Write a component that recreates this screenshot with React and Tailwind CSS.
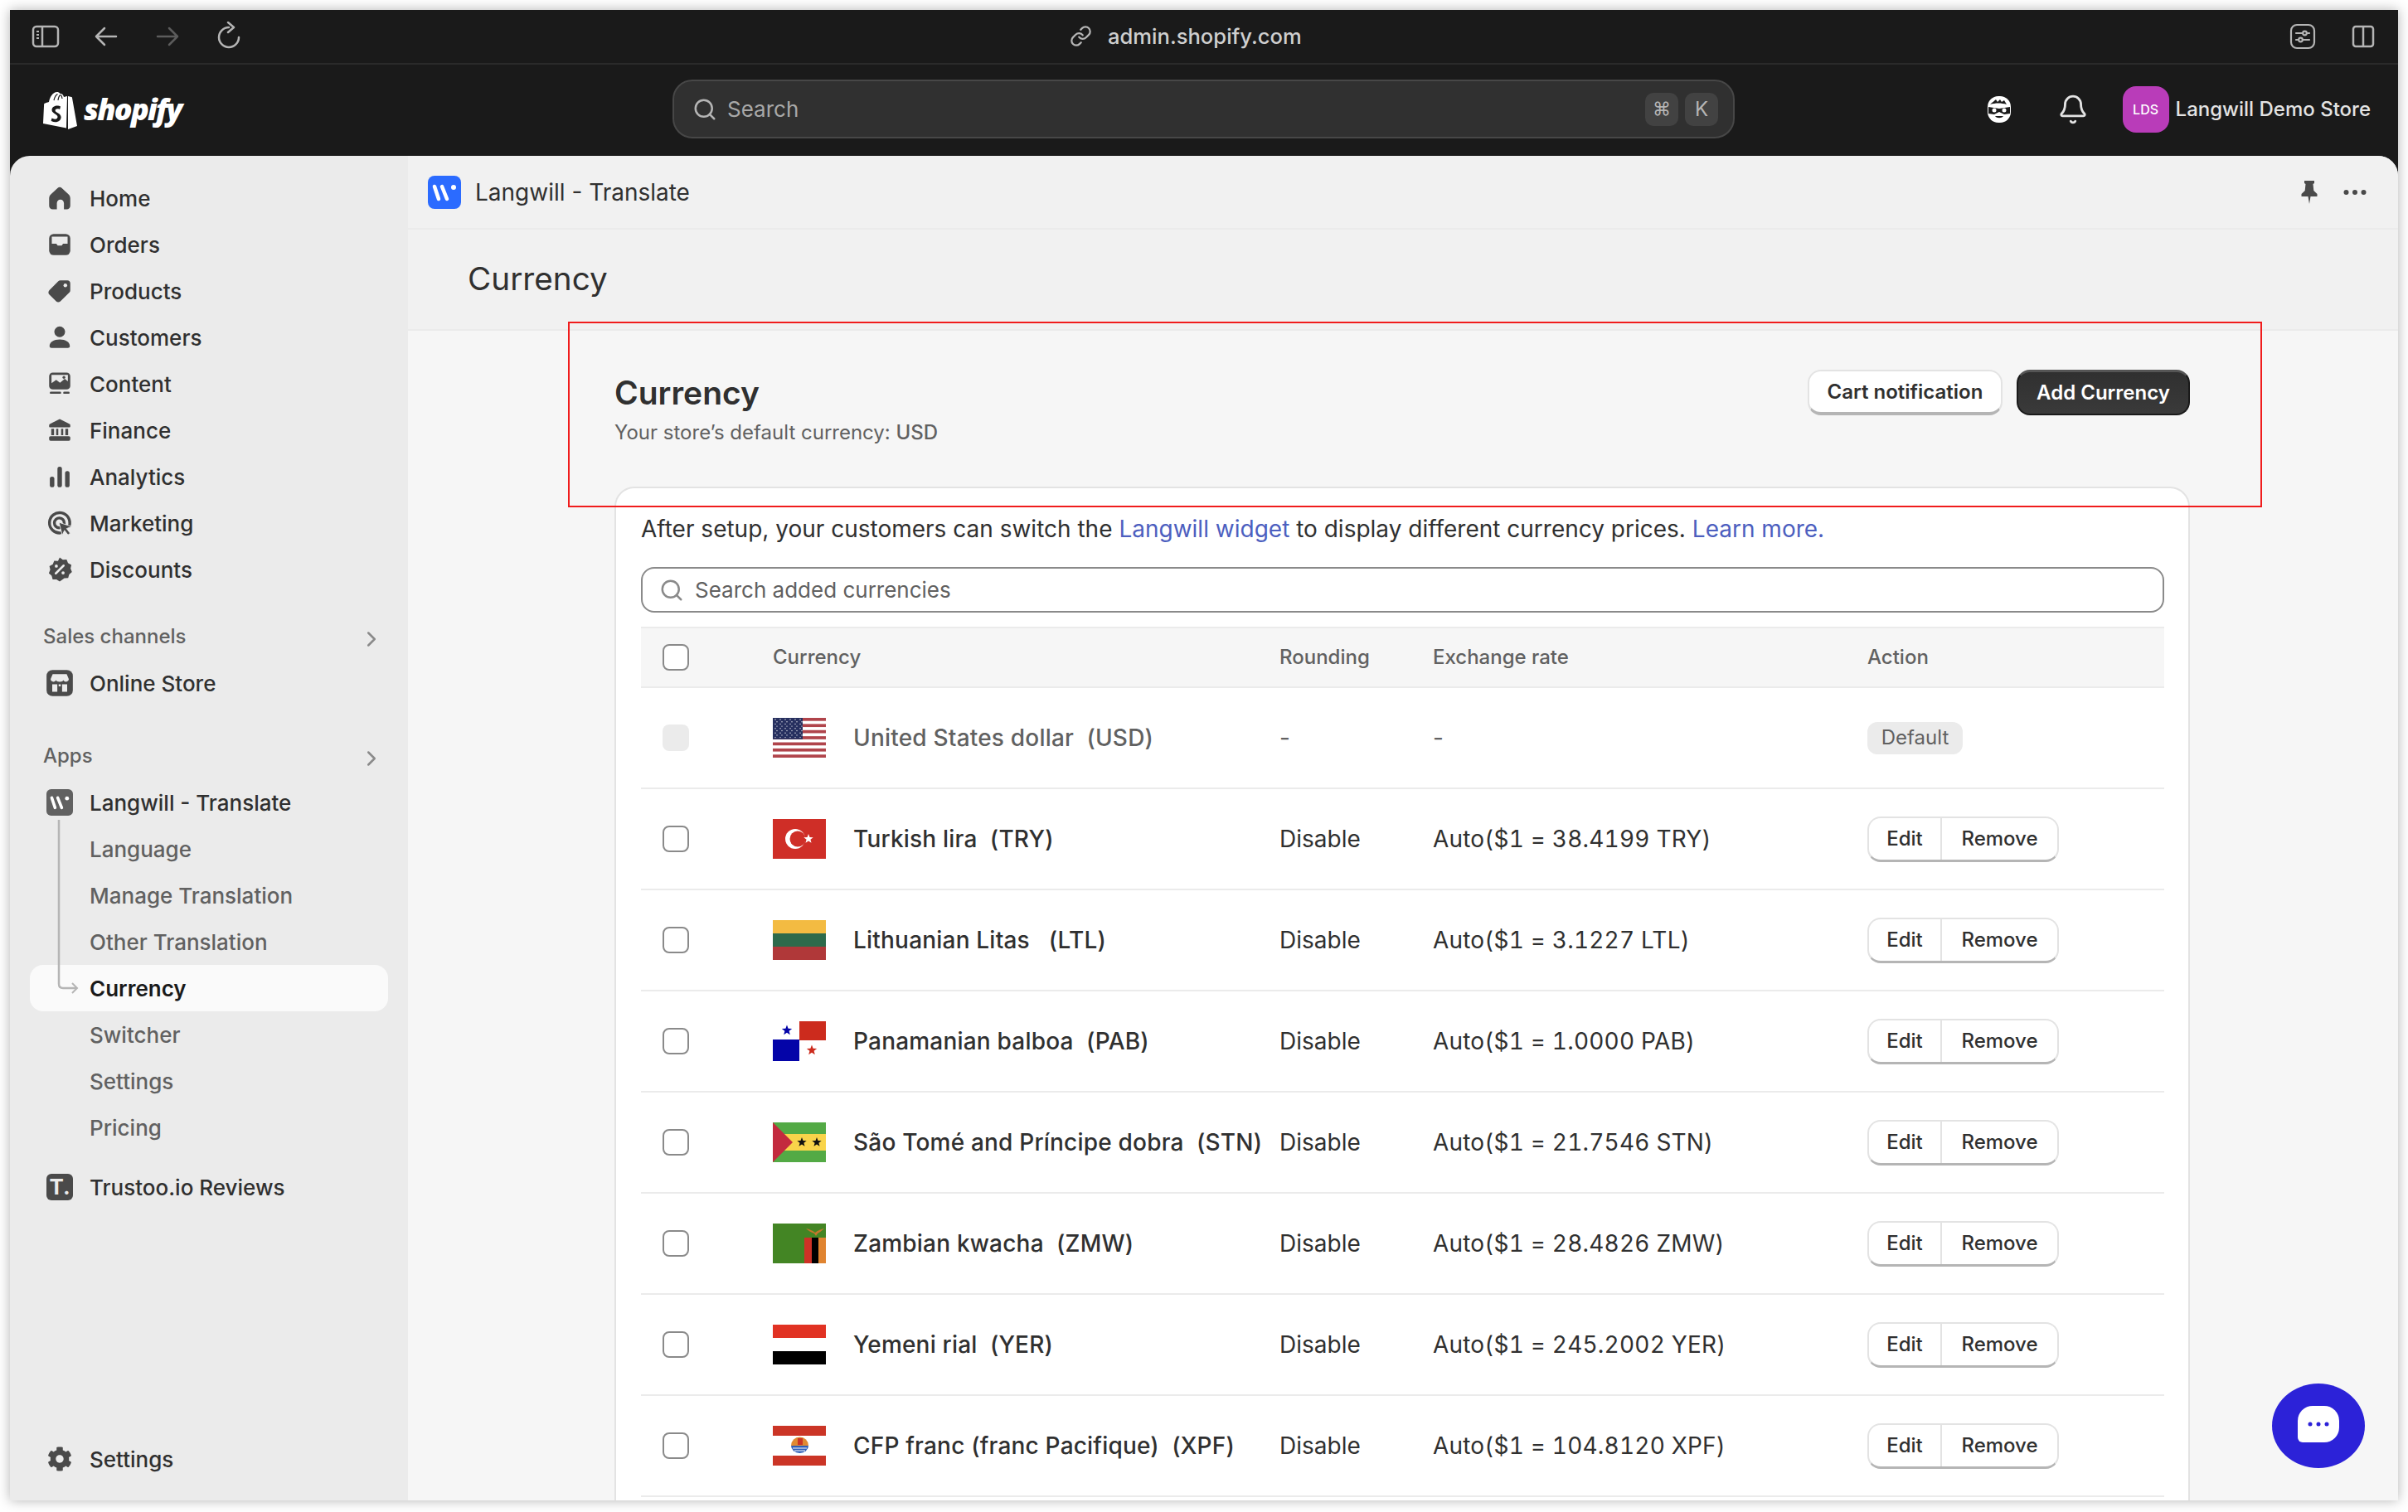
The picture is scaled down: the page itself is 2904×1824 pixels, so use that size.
import React from "react";
import { Bell, ChevronRight, Link as LinkIcon, Search } from "lucide-react";
import { FaCog } from "react-icons/fa";

const ICON = "#4a4a4a";
const SIDE = "#ebebeb";

function Glyph({ children, size = 34 }) {
  return (
    <svg width={size} height={size} viewBox="0 0 20 20" fill={ICON}>
      {children}
    </svg>
  );
}

const HomeIcon = () => (
  <Glyph>
    <path d="M10 2.2c.5 0 1 .2 1.4.6l4.9 4.6c.8.7 1.2 1.7 1.2 2.8v5.3c0 1.4-1.1 2.5-2.5 2.5h-2v-4.3c0-1.4-1.1-2.6-2.500-2.6s-2.500 1.2-2.500 2.600V18H5c-1.400 0-2.500-1.100-2.500-2.500v-5.300c0-1.100.4-2.100 1.200-2.800l4.900-4.600c.4-.4.9-.6 1.400-.6z" />
  </Glyph>
);
const OrdersIcon = () => (
  <Glyph>
    <rect x="2.500" y="2.500" width="15" height="15" rx="3.200" />
    <path d="M4.400 4.400h11.200v5h-3.200l-1 1.400H8.600l-1-1.400H4.400z" fill={SIDE} />
  </Glyph>
);
const ProductsIcon = () => (
  <Glyph>
    <path d="M17.500 4.500v5c0 .6-.2 1.100-.6 1.500l-6.400 6.400c-.9.8-2.200.8-3 0l-4.900-4.900c-.8-.8-.8-2.100 0-3L9 3.100c.4-.4.9-.6 1.500-.6h5c1.100 0 2 .9 2 2z" />
    <circle cx="14" cy="6" r="1.300" fill={SIDE} />
  </Glyph>
);
const CustomersIcon = () => (
  <Glyph>
    <circle cx="10" cy="6" r="3.800" />
    <path d="M2.800 16.200c0-2.800 3-4.700 7.200-4.700s7.200 1.900 7.200 4.700c0 .9-.6 1.300-1.400 1.300H4.200c-.8 0-1.400-.4-1.400-1.300z" />
  </Glyph>
);
const ContentIcon = () => (
  <Glyph>
    <rect x="2.500" y="2" width="15" height="12" rx="2.600" />
    <path d="M4.200 3.700h11.600v4.500l-2.200-1.700-3.400 2.700-2.700-2-3.300 2.300z" fill={SIDE} />
    <circle cx="13" cy="5.400" r="1" />
    <rect x="3" y="15.600" width="8" height="1.500" rx=".7" />
    <rect x="12.500" y="15.600" width="4.500" height="1.500" rx=".7" />
  </Glyph>
);
const FinanceIcon = () => (
  <Glyph>
    <path d="M10 2l7 3.600c.4.2.5.5.5.9v1c0 .3-.2.500-.5.500H3c-.3 0-.5-.2-.5-.5v-1c0-.4.100-.7.500-.9z" />
    <path d="M4 9h2v4.500H4zM7.500 9h1.500v4.500H7.500zM11 9h1.500v4.500H11zM14 9h2v4.500h-2z" />
    <rect x="2.500" y="14.200" width="15" height="3.300" rx="1" />
  </Glyph>
);
const AnalyticsIcon = () => (
  <Glyph>
    <rect x="3" y="10" width="3.200" height="7.500" rx="1.500" />
    <rect x="8.400" y="3" width="3.200" height="14.500" rx="1.500" />
    <rect x="13.800" y="6" width="3.200" height="11.500" rx="1.500" />
  </Glyph>
);
const MarketingIcon = () => (
  <Glyph>
    <path d="M16.800 12a7.200 7.200 0 1 0-6.300 5" fill="none" stroke={ICON} strokeWidth="2" strokeLinecap="round" />
    <path d="M13.200 10.200a3.500 3.500 0 1 0-3.500 3.200" fill="none" stroke={ICON} strokeWidth="2" strokeLinecap="round" />
    <path d="M9.500 9.500l9 3-3.600 1.400 2.500 3.300-1.500 1.200-2.500-3.200-1.600 3.400z" stroke={SIDE} strokeWidth=".5" />
  </Glyph>
);
const DiscountsIcon = () => (
  <Glyph>
    <path d="M10 1.500l2.200 1.600 2.700-.2 1 2.500 2.400 1.300-.6 2.600 1 2.400-2 1.800-.7 2.600-2.700.1L10 18.500l-2.300-1.400-2.700-.1-.7-2.600-2-1.800 1-2.400-.6-2.600 2.400-1.300 1-2.500 2.700.2z" />
    <path d="M7.200 12.800l5.600-5.600" stroke={SIDE} strokeWidth="1.500" strokeLinecap="round" />
    <circle cx="7.600" cy="7.600" r="1.100" fill={SIDE} />
    <circle cx="12.400" cy="12.400" r="1.100" fill={SIDE} />
  </Glyph>
);
const StoreIcon = () => (
  <Glyph size={36}>
    <rect x="1.200" y="1.200" width="17.600" height="17.600" rx="4" />
    <path d="M5.300 4h9.400l1.400 3.400c0 1-.9 1.700-1.800 1.700-.8 0-1.500-.4-1.800-1.100-.3.700-1.100 1.100-2.500 1.100S7.800 8.700 7.500 8c-.3.700-1 1.100-1.800 1.100-.9 0-1.800-.7-1.800-1.700z" fill={SIDE} />
    <path d="M5 10.800h3.400v5H5zM11.600 10.800H15v5h-3.400zM9.300 10.800h1.400v1.400H9.300z" fill={SIDE} />
  </Glyph>
);
const LangwillMark = ({ bg, size, radius }) => (
  <svg width={size} height={size} viewBox="0 0 40 40">
    <rect width="40" height="40" rx={radius} fill={bg} />
    <path d="M8 13l5 15M17 13l6 15" stroke="#fff" strokeWidth="4.500" strokeLinecap="round" />
    <circle cx="31" cy="14" r="3" fill="#fff" />
  </svg>
);

// flags, all drawn on a 64x48 box
function star(cx, cy, r) {
  const pts = [];
  for (let i = 0; i < 10; i++) {
    const a = -Math.PI / 2 + (i * Math.PI) / 5;
    const d = i % 2 === 0 ? r : r * 0.42;
    pts.push(`${cx + d * Math.cos(a)},${cy + d * Math.sin(a)}`);
  }
  return pts.join(" ");
}

const Flag = ({ children }) => (
  <svg width="64" height="48" viewBox="0 0 64 48" className="shrink-0">
    {children}
  </svg>
);

const flags = {
  USD: (
    <Flag>
      <rect width="64" height="48" fill="#fff" />
      {[0, 1, 2, 3, 4, 5, 6].map((i) => (
        <rect key={i} y={i * 7.38} width="64" height="3.690" fill="#b0444b" />
      ))}
      <rect width="36" height="25.800" fill="#27305f" />
      {[0, 1, 2, 3, 4, 5, 6, 7, 8].map((r) =>
        [0, 1, 2, 3, 4, 5].map((c) => (
          <circle key={`${r}-${c}`} cx={3 + c * 6 + (r % 2) * 2} cy={2 + r * 2.700} r=".7" fill="#e8e8ee" />
        ))
      )}
    </Flag>
  ),
  TRY: (
    <Flag>
      <rect width="64" height="48" fill="#cf2e27" />
      <circle cx="27" cy="24" r="12" fill="#fff" />
      <circle cx="30" cy="24" r="9.500" fill="#cf2e27" />
      <polygon points={star(43, 24, 6)} fill="#fff" />
    </Flag>
  ),
  LTL: (
    <Flag>
      <rect width="64" height="16" fill="#f3bb42" />
      <rect y="16" width="64" height="16" fill="#2d6a4b" />
      <rect y="32" width="64" height="16" fill="#b03839" />
    </Flag>
  ),
  PAB: (
    <Flag>
      <rect width="64" height="48" fill="#fff" />
      <rect x="32" width="32" height="23" fill="#cc2b1d" />
      <rect y="22" width="32" height="26" fill="#0404a8" />
      <polygon points={star(17, 11, 6.500)} fill="#0404a8" />
      <polygon points={star(47, 35, 6.500)} fill="#cc2b1d" />
    </Flag>
  ),
  STN: (
    <Flag>
      <rect width="64" height="48" fill="#53aa45" />
      <rect y="14" width="64" height="20" fill="#f9d44a" />
      <polygon points="0,0 24,24 0,48" fill="#c32a3e" />
      <polygon points={star(35, 24, 6)} fill="#111" />
      <polygon points={star(53, 24, 6)} fill="#111" />
    </Flag>
  ),
  ZMW: (
    <Flag>
      <rect width="64" height="48" fill="#438524" />
      <rect x="38" y="17" width="9" height="31" fill="#ce3226" />
      <rect x="47" y="17" width="8" height="31" fill="#000" />
      <rect x="55" y="17" width="9" height="31" fill="#e08430" />
      <path d="M40 6c4 1 7 2 11 5 4-3 7-4 11-5-3 3-6 5-8 6l-2 3-2-3c-3-1-7-3-10-6z" fill="#c5772c" />
    </Flag>
  ),
  YER: (
    <Flag>
      <rect width="64" height="16" fill="#e13223" />
      <rect y="16" width="64" height="16" fill="#fff" />
      <rect y="32" width="64" height="16" fill="#000" />
    </Flag>
  ),
  XPF: (
    <Flag>
      <rect width="64" height="48" fill="#fff" />
      <rect width="64" height="12" fill="#cb3526" />
      <rect y="36" width="64" height="12" fill="#cb3526" />
      <path d="M22 24a10.500 10.500 0 0 1 21 0z" fill="#e08a32" />
      <rect x="30" y="15" width="6" height="8" fill="#cb3526" />
      <path d="M22 24h21a10.500 9 0 0 1-21 0z" fill="#2f5fb8" />
      <path d="M24 27h17M26 30h13" stroke="#fff" strokeWidth="1.200" />
    </Flag>
  ),
};

const mainNav = [
  { name: "Home", icon: <HomeIcon /> },
  { name: "Orders", icon: <OrdersIcon /> },
  { name: "Products", icon: <ProductsIcon /> },
  { name: "Customers", icon: <CustomersIcon /> },
  { name: "Content", icon: <ContentIcon /> },
  { name: "Finance", icon: <FinanceIcon /> },
  { name: "Analytics", icon: <AnalyticsIcon /> },
  { name: "Marketing", icon: <MarketingIcon /> },
  { name: "Discounts", icon: <DiscountsIcon /> },
];

const subNav = ["Language", "Manage Translation", "Other Translation", "Currency", "Switcher", "Settings", "Pricing"];

const currencies = [
  { code: "TRY", name: "Turkish lira  (TRY)", rate: "Auto($1 = 38.4199 TRY)" },
  { code: "LTL", name: "Lithuanian Litas   (LTL)", rate: "Auto($1 = 3.1227 LTL)" },
  { code: "PAB", name: "Panamanian balboa  (PAB)", rate: "Auto($1 = 1.0000 PAB)" },
  { code: "STN", name: "São Tomé and Príncipe dobra  (STN)", rate: "Auto($1 = 21.7546 STN)" },
  { code: "ZMW", name: "Zambian kwacha  (ZMW)", rate: "Auto($1 = 28.4826 ZMW)" },
  { code: "YER", name: "Yemeni rial  (YER)", rate: "Auto($1 = 245.2002 YER)" },
  { code: "XPF", name: "CFP franc (franc Pacifique)  (XPF)", rate: "Auto($1 = 104.8120 XPF)" },
];

const rowGrid = "grid grid-cols-[159px_611px_185px_524px_1fr] items-center";

function NavRow({ icon, children }) {
  return (
    <div className="flex h-[56px] items-center gap-[16px] pl-[16px] text-[26px] font-medium text-[#303030]">
      <span className="flex w-[40px] justify-center">{icon}</span>
      <span>{children}</span>
    </div>
  );
}

function SectionRow({ children }) {
  return (
    <div className="flex h-[56px] items-center justify-between pl-[16px] pr-[5px] text-[24px] font-medium text-[#616161]">
      <span>{children}</span>
      <ChevronRight size={30} color="#8a8a8a" strokeWidth={2} className="mt-[6px]" />
    </div>
  );
}

function Checkbox({ disabled }) {
  return disabled ? (
    <span className="ml-[26px] block h-[32px] w-[32px] rounded-[8px] bg-[#ebebeb]" />
  ) : (
    <span className="ml-[26px] block h-[32px] w-[32px] rounded-[8px] border-2 border-[#8a8a8a] bg-white" />
  );
}

export default function App() {
  return (
    <div className="h-[1824px] w-[2904px] overflow-hidden bg-white px-[12px] pb-[14px] pt-[12px] font-[family-name:Inter,sans-serif]">
      <div className="flex h-full flex-col overflow-hidden bg-[#1a1a1a] shadow-[0_0_14px_rgba(0,0,0,0.3)]">
        {/* browser bar */}
        <div className="relative flex h-[66px] shrink-0 items-center justify-between border-b-2 border-[#2a2a2a] pl-[26px] pr-[28px]">
          <div className="flex items-center">
            <svg width="34" height="28" viewBox="0 0 34 28" fill="none" stroke="#b5b5b5" strokeWidth="2.500">
              <rect x="2" y="2" width="30" height="24" rx="4" />
              <path d="M13 2v24" />
              <path d="M6 8h3M6 12h3M6 16h3" strokeWidth="2" />
            </svg>
            <svg width="28" height="24" viewBox="0 0 28 24" fill="none" stroke="#b5b5b5" strokeWidth="2.500" strokeLinecap="round" strokeLinejoin="round" className="ml-[42px]">
              <path d="M2 12h24M12 2L2 12l10 10" />
            </svg>
            <svg width="28" height="24" viewBox="0 0 28 24" fill="none" stroke="#5c5c5c" strokeWidth="2.500" strokeLinecap="round" strokeLinejoin="round" className="ml-[46px]">
              <path d="M26 12H2M16 2l10 10-10 10" />
            </svg>
            <svg width="28" height="34" viewBox="0 0 28 34" fill="none" stroke="#b5b5b5" strokeWidth="2.500" strokeLinecap="round" strokeLinejoin="round" className="ml-[46px] mt-[-2px]">
              <path d="M14 7a12 12 0 1 0 12 12" />
              <path d="M13 1l7 6-7 6" />
            </svg>
          </div>
          <div className="absolute left-[1278px] flex items-center gap-[19px] text-[25.6px] font-medium text-[#cfcfcf]">
            <LinkIcon size={27} color="#b5b5b5" strokeWidth={2} />
            <span>admin.shopify.com</span>
          </div>
          <div className="flex items-center gap-[43px]">
            <svg width="32" height="32" viewBox="0 0 32 32" fill="none" stroke="#b5b5b5" strokeWidth="2.200" strokeLinecap="round">
              <rect x="2" y="2" width="28" height="28" rx="7" />
              <path d="M8 12h8M21 12h3M8 20h3M16 20h8" />
              <circle cx="18.500" cy="12" r="2.300" />
              <circle cx="13.500" cy="20" r="2.300" />
            </svg>
            <svg width="28" height="28" viewBox="0 0 28 28" fill="none" stroke="#b5b5b5" strokeWidth="2.500">
              <rect x="2" y="2" width="24" height="24" rx="3" />
              <path d="M14 2v24" />
            </svg>
          </div>
        </div>

        {/* admin top bar */}
        <div className="flex h-[110px] shrink-0 items-center pb-[3px]">
          <div className="flex w-[799px] items-center gap-[7px] pl-[40px]">
            <svg width="42" height="48" viewBox="0 0 42 48">
              <path d="M30 8L34 9c.5 0 1 .4 1 .9L41 44l-11 4z" fill="#fff" />
              <path d="M29 8l-4 1c-.8-2.500-2-4-4-4h-.5C19.500 3.500 18 3 17 3 11 3 8 10 7 15c-2 .6-4 1.200-4.500 1.400-1.200.4-1.300.4-1.400 1.600L0 41l28 5.500z" fill="#fff" />
              <path d="M21 20.500c-1-.5-2.500-.9-4-.9-4 0-6.500 2.500-6.500 5.200 0 4.300 7 4.800 7 8.300 0 1.700-1.300 2.600-3 2.600-1.900 0-4-1.200-4-1.200l-.9 3.200s2 1.600 5 1.600c4.300 0 7-2.800 7-6.100 0-4.700-7-5.300-7-8 0-1.200 1-2 2.600-2 1.500 0 2.900.7 2.900.7z" fill="#1a1a1a" />
              <path d="M13 13c.8-3.500 2.400-6.500 4.500-7.500M18 13c.4-3 1.400-5.500 2.800-6.500M23 11c-.2-2-.7-3.500-1.500-4.500" stroke="#1a1a1a" strokeWidth="1.200" fill="none" />
            </svg>
            <span className="text-[36px] font-extrabold italic leading-none tracking-[-1.800px] text-white font-[family-name:'Open_Sans',sans-serif]">shopify</span>
          </div>
          <div className="flex h-[71px] w-[1281px] items-center rounded-[24px] border-2 border-[#474747] bg-[#303030] pl-[22px] pr-[18px]">
            <Search size={30} color="#b5b5b5" strokeWidth={2} />
            <span className="ml-[12px] flex-1 text-[26px] text-[#a8a8a8]">Search</span>
            <span className="flex h-[40px] w-[40px] items-center justify-center rounded-[10px] bg-[#424242] text-[22px] text-[#b5b5b5]">⌘</span>
            <span className="ml-[8px] flex h-[40px] w-[40px] items-center justify-center rounded-[10px] bg-[#424242] text-[24px] text-[#b5b5b5]">K</span>
          </div>
          <div className="flex flex-1 items-center justify-end pr-[33px]">
            <svg width="32" height="34" viewBox="0 0 32 34" className="mr-[54px]">
              <rect x="2" y="1" width="28" height="32" rx="13" fill="#fff" />
              <path d="M5 11c3-3 5-4 7-6l2 3 3-3 2 3 3-2 3 5c-6-2-14-2-20 0z" fill="#1a1a1a" />
              <path d="M3 14l13 2 13-2v8l-7 1-6-3-6 3-7-1z" fill="#1a1a1a" />
              <circle cx="10" cy="18" r="2.500" fill="#fff" />
              <circle cx="22" cy="18" r="2.500" fill="#fff" />
              <path d="M11 25c2 3 8 3 10 0z" fill="#1a1a1a" />
            </svg>
            <Bell size={38} color="#e3e3e3" strokeWidth={1.800} className="mr-[41px]" />
            <span className="flex h-[56px] w-[56px] items-center justify-center rounded-[16px] bg-[#b93cb9] text-[16px] font-medium text-white">LDS</span>
            <span className="ml-[8px] text-[24px] font-medium text-[#e3e3e3]">Langwill Demo Store</span>
          </div>
        </div>

        {/* admin body */}
        <div className="flex min-h-0 flex-1 overflow-hidden rounded-t-[24px]">
          <aside className="flex w-[480px] shrink-0 flex-col bg-[#ebebeb] px-[24px] pb-[22px] pt-[23px]">
            {mainNav.map((item) => (
              <NavRow key={item.name} icon={item.icon}>
                {item.name}
              </NavRow>
            ))}
            <div className="mt-[25px]">
              <SectionRow>Sales channels</SectionRow>
              <NavRow icon={<StoreIcon />}>Online Store</NavRow>
            </div>
            <div className="mt-[32px]">
              <SectionRow>Apps</SectionRow>
              <NavRow icon={<LangwillMark bg="#616161" size={32} radius={7} />}>Langwill - Translate</NavRow>
              <div className="relative">
                {subNav.map((item) =>
                  item === "Currency" ? (
                    <div key={item} className="flex h-[56px] items-center rounded-[16px] bg-[#fafafa] pl-[72px] text-[26px] font-semibold text-[#1a1a1a]">
                      {item}
                    </div>
                  ) : (
                    <div key={item} className="flex h-[56px] items-center pl-[72px] text-[26px] font-medium text-[#616161]">
                      {item}
                    </div>
                  )
                )}
                <svg width="40" height="214" viewBox="0 0 40 214" fill="none" stroke="#b5b5b5" strokeWidth="2.500" className="absolute left-[30px] top-[-7px]">
                  <path d="M5 0v198q0 5 5 5h16" />
                  <path d="M21 197l6 6-6 6" strokeWidth="2" />
                </svg>
              </div>
              <div className="mt-[16px]">
                <NavRow
                  icon={
                    <span className="flex h-[32px] w-[32px] items-center justify-center rounded-[6px] bg-[#4a4a4a] text-[26px] font-bold leading-none text-[#ebebeb]">
                      T.
                    </span>
                  }
                >
                  Trustoo.io Reviews
                </NavRow>
              </div>
            </div>
            <div className="mt-auto">
              <NavRow icon={<FaCog size={30} color={ICON} />}>Settings</NavRow>
            </div>
          </aside>

          <main className="relative flex min-w-0 flex-1 flex-col bg-[#f6f6f6]">
            <div className="flex h-[89px] shrink-0 items-center justify-between border-b-2 border-[#ebebeb] bg-[#f1f1f1] pl-[24px] pr-[38px]">
              <div className="flex items-center gap-[17px]">
                <LangwillMark bg="#2b6bff" size={40} radius={8} />
                <span className="text-[28px] text-[#303030]">Langwill - Translate</span>
              </div>
              <div className="flex items-center gap-[29px]">
                <svg width="24" height="30" viewBox="0 0 24 30" fill="#4a4a4a">
                  <path d="M6 1h12v3l-1.500 1 .8 8 4.200 4v3H13.500l-1.500 9-1.500-9H2.500v-3l4.200-4 .8-8L6 4z" />
                </svg>
                <svg width="28" height="8" viewBox="0 0 28 8" fill="#4a4a4a">
                  <circle cx="3.500" cy="4" r="3" />
                  <circle cx="14" cy="4" r="3" />
                  <circle cx="24.500" cy="4" r="3" />
                </svg>
              </div>
            </div>
            <div className="flex h-[122px] shrink-0 items-center border-b-2 border-[#ebebeb] bg-[#f1f1f1] pb-[1px] pl-[72px] text-[38.7px] text-[#303030]">
              Currency
            </div>

            <div className="ml-[249px] flex min-h-0 w-[1900px] flex-1 flex-col overflow-hidden">
              <div className="flex h-[188px] shrink-0 justify-between pt-[47px]">
                <div>
                  <h1 className="text-[39px] font-semibold leading-[56px] text-[#303030]">Currency</h1>
                  <p className="text-[24px] leading-[39px] text-[#616161]">
                    Your store’s default currency: <span className="font-medium">USD</span>
                  </p>
                </div>
                <div className="flex h-[55px] gap-[17px]">
                  <button className="w-[235px] rounded-[16px] border-2 border-b-[4px] border-[#e3e3e3] border-b-[#b5b5b5] bg-white text-[24px] font-semibold text-[#303030]">
                    Cart notification
                  </button>
                  <button className="w-[209px] rounded-[16px] border-2 border-t-[3px] border-[#1a1a1a] border-t-[#555] bg-gradient-to-b from-[#303030] to-[#3a3a3a] text-[24px] font-semibold text-white">
                    Add Currency
                  </button>
                </div>
              </div>

              <div className="min-h-0 flex-1 overflow-hidden rounded-t-[24px] border-x-2 border-t-2 border-[#e3e3e3] bg-white pl-[30px] pr-[29px] pt-[30px]">
                <p className="h-[38px] text-[28px] leading-[38px] text-[#303030]">
                  After setup, your customers can switch the <span className="text-[#4d5fbf]">Langwill widget</span> to display different currency prices. <span className="text-[#4d5fbf]">Learn more.</span>
                </p>
                <div className="mt-[27px] flex h-[55px] items-center rounded-[16px] border-2 border-[#8a8a8a] pl-[20px] text-[26px] text-[#616161]">
                  <Search size={30} color="#8a8a8a" strokeWidth={2} />
                  <span className="ml-[13px]">Search added currencies</span>
                </div>
                <div className={`${rowGrid} mt-[17px] h-[74px] border-y-2 border-[#ebebeb] bg-[#f6f6f6] text-[24px] font-medium text-[#616161]`}>
                  <Checkbox />
                  <span>Currency</span>
                  <span>Rounding</span>
                  <span>Exchange rate</span>
                  <span>Action</span>
                </div>

                <div className={`${rowGrid} h-[122px] border-b-2 border-[#ebebeb] text-[28px] text-[#616161]`}>
                  <Checkbox disabled />
                  <div className="flex items-center gap-[33px] font-medium">
                    {flags.USD}
                    <span className="whitespace-pre tracking-[0.2px]">United States dollar  (USD)</span>
                  </div>
                  <span>-</span>
                  <span>-</span>
                  <span className="flex h-[39px] w-[115px] items-center justify-center rounded-[12px] bg-[#ebebeb] text-[24px]">Default</span>
                </div>

                {currencies.map((c) => (
                  <div key={c.code} className={`${rowGrid} h-[122px] border-b-2 border-[#ebebeb] text-[28px] text-[#303030]`}>
                    <Checkbox />
                    <div className="flex items-center gap-[33px] font-medium">
                      {flags[c.code]}
                      <span className="whitespace-pre tracking-[0.2px]">{c.name}</span>
                    </div>
                    <span>Disable</span>
                    <span className="tabular-nums tracking-[0.2px]">{c.rate}</span>
                    <div className="flex h-[55px] w-[231px] rounded-[16px] border-2 border-b-[3px] border-[#e3e3e3] border-b-[#b5b5b5] text-[24px] font-[550]">
                      <span className="flex w-[88px] items-center justify-center border-r-2 border-[#e3e3e3]">Edit</span>
                      <span className="flex flex-1 items-center justify-center">Remove</span>
                    </div>
                  </div>
                ))}
              </div>
            </div>

            {/* red annotation box from the screenshot */}
            <div className="pointer-events-none absolute left-[193px] top-[200px] h-[224px] w-[2043px] border-2 border-[#f01c1c]" />

            <div className="absolute bottom-[39px] right-[40px] flex h-[102px] w-[112px] items-center justify-center rounded-[50%] bg-[#2c22d8] pb-[4px]">
              <svg width="50" height="44" viewBox="0 0 50 44">
                <path d="M0 18a18 18 0 0 1 18-18h14a18 18 0 0 1 18 18v8a18 18 0 0 1-18 18H6a6 6 0 0 1-6-6z" fill="#fff" />
                <circle cx="15" cy="22" r="2.500" fill="#2c22d8" />
                <circle cx="25" cy="22" r="2.500" fill="#2c22d8" />
                <circle cx="35" cy="22" r="2.500" fill="#2c22d8" />
              </svg>
            </div>
          </main>
        </div>
      </div>
    </div>
  );
}
